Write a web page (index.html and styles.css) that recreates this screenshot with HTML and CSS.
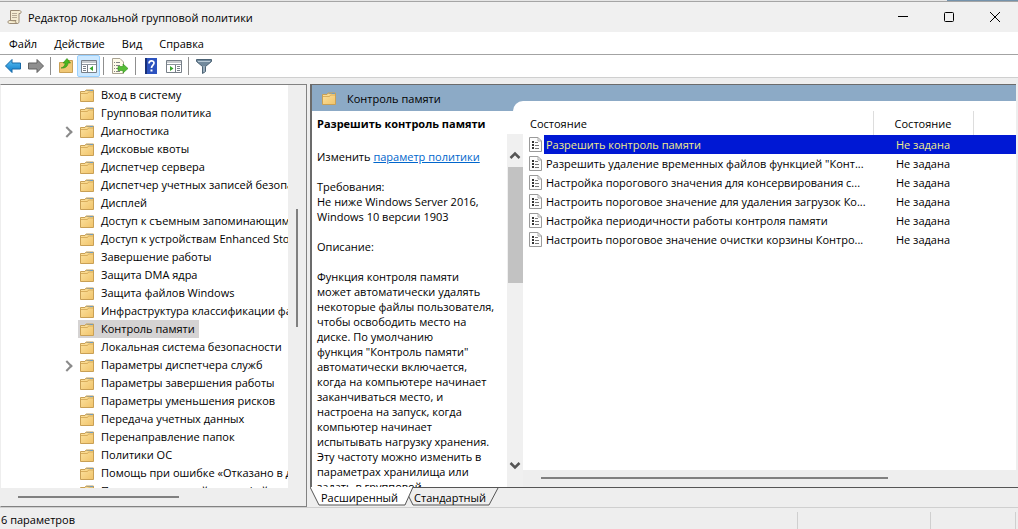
FILE: index.html
```
<!DOCTYPE html>
<html lang="ru">
<head>
    <meta charset="UTF-8">
    <meta name="viewport" content="width=device-width, initial-scale=1.0">
    <title>Редактор локальной групповой политики</title>
    <link rel="stylesheet" href="styles.css">
</head>
<body>
    <svg class="sprite" aria-hidden="true">
        <defs>
            <linearGradient id="fold" x1="0" y1="0" x2="1" y2="1">
                <stop offset="0" stop-color="#fde3a0"/>
                <stop offset="1" stop-color="#f0c36a"/>
            </linearGradient>
            <linearGradient id="blue" x1="0" y1="0" x2="0" y2="1">
                <stop offset="0" stop-color="#5cc3f5"/>
                <stop offset="1" stop-color="#0b78c8"/>
            </linearGradient>
            <symbol id="folder" viewBox="0 0 14 13">
                <path d="M.5 2.500H5l1-1.500h7.500v11.500H.5z" fill="url(#fold)" stroke="#c9a055"/>
                <path d="M6.500 1.500h6" stroke="#a8a182"/>
                <path d="M10 1.500h3" stroke="#6f9cc0"/>
                <path d="M1 4.500h6.500l1-1.500H13" fill="none" stroke="#d9ae5c"/>
            </symbol>
            <symbol id="page" viewBox="0 0 13 15">
                <path d="M.5.5h8.500l3.500 3.500v10.500H.5z" fill="#fdfdfd" stroke="#9a9a9a"/>
                <path d="M9 .5V4h3.500" fill="none" stroke="#aaa"/>
                <path d="M3 4h2v2H3zM3 7h2v2H3zM3 10h2v2H3z" fill="#333"/>
                <path d="M6 5.500h3M6 8.500h4M6 11.500h4" stroke="#777"/>
            </symbol>
        </defs>
    </svg>

    <div class="backdrop"></div>
    <header class="titlebar">
        <svg class="app-icon" viewBox="0 0 15 16">
            <path d="M3.500 1.500h9c2 0 2 3 .5 3h-1v8c0 1-.5 2-1.500 2h-8c-2 0-2-3 0-3h1z" fill="#f5ecd2" stroke="#9a8a74"/>
            <path d="M2.500 11.500h6.500c-1 1 0 3 1.500 3" fill="#e0d1aa" stroke="#9a8a74"/>
            <path d="M5 4.500h5M5 6.500h5M5 8.500h5" stroke="#b8ab96"/>
        </svg>
        <h1>Редактор локальной групповой политики</h1>
        <div class="window-buttons">
            <button aria-label="Свернуть"><svg viewBox="0 0 12 12"><path d="M1 5.500h10"/></svg></button>
            <button aria-label="Развернуть"><svg viewBox="0 0 12 12"><rect x="1.500" y="1.500" width="9" height="9" rx="1"/></svg></button>
            <button aria-label="Закрыть"><svg viewBox="0 0 12 12"><path d="M1 1l10 10M11 1L1 11"/></svg></button>
        </div>
    </header>

    <nav class="menu">
        <button>Файл</button>
        <button>Действие</button>
        <button>Вид</button>
        <button>Справка</button>
    </nav>

    <div class="toolbar">
        <button aria-label="Назад"><svg viewBox="0 0 16 16"><path d="M.5 8L7 1.500V5h8.500v6H7v3.500z" fill="url(#blue)" stroke="#1768a6"/></svg></button>
        <button aria-label="Вперёд"><svg viewBox="0 0 16 16"><path d="M15.500 8L9 1.500V5H.5v6H9v3.500z" fill="#8f8f8f" stroke="#606060"/></svg></button>
        <span class="separator"></span>
        <button aria-label="Вверх"><svg viewBox="0 0 16 16"><path d="M1.500 4.500h7l1.500-2h4.500v12h-13z" fill="#f0c775" stroke="#c9a055"/><path d="M3 10c3-1 4-2.500 4-5H5L9 .5 12.500 5H10c0 3.500-3 5.500-7 5z" fill="#4cb51f" stroke="#2f8a16" stroke-width=".6"/></svg></button>
        <button class="pressed" aria-label="Дерево консоли"><svg viewBox="0 0 16 16"><path d="M.5 2.500h15v12H.5z" fill="#fff" stroke="#777f88"/><path d="M1 4h14M1 6.500h14" stroke="#8c949c"/><path d="M6.500 7v7.500" stroke="#777f88"/><path d="M2 8.500h3M2 10.500h3M2 12.500h3" stroke="#777f88"/><path d="M12 8v5l-3.500-2.500z" fill="#35a52a"/></svg></button>
        <span class="separator"></span>
        <button class="wide" aria-label="Экспорт списка"><svg viewBox="0 0 16 16"><path d="M.5.5H8L11.500 4v11.500H.5z" fill="#fffbe9" stroke="#a8a292"/><path d="M2 4.500h1M2 7.500h1M2 10.500h1M2 13.500h1M4 4.500h4M4 7.500h4M4 10.500h4M4 13.500h4" stroke="#858585"/><path d="M6 8.500h5V6l5 4.500-5 4.500v-2.500H6z" fill="#55bd35" stroke="#2f8f1b" stroke-width=".6"/></svg></button>
        <span class="separator"></span>
        <button aria-label="Справка"><svg viewBox="0 0 16 16"><path d="M2 0h12v16H2z" fill="#2c52bf"/><path d="M2 0h2v16H2z" fill="#183079"/><path d="M6 5.500C6 2 11 2 11 5c0 2-2.500 2.200-2.500 5" fill="none" stroke="#fff" stroke-width="1.700"/><path d="M7.500 11.500h2v2h-2z" fill="#fff"/></svg></button>
        <button aria-label="Панель действий"><svg viewBox="0 0 16 16"><path d="M.5 2.500h15v12H.5z" fill="#fff" stroke="#777f88"/><path d="M1 4h14M1 6.500h14" stroke="#8c949c"/><path d="M9.500 7v7.500" stroke="#777f88"/><path d="M11 8.500h3M11 10.500h3M11 12.500h3" stroke="#777f88"/><path d="M4 8v5l3.500-2.500z" fill="#35a52a"/></svg></button>
        <span class="separator"></span>
        <button aria-label="Фильтр"><svg viewBox="0 0 16 16"><path d="M.5 1.500h15v2l-6 5v5l-3 2v-7l-6-5z" fill="#71899c" stroke="#4c6375"/><path d="M2 3.500h12" stroke="#b9cad6"/><path d="M8 8v6" stroke="#c2d0da"/></svg></button>
    </div>

    <main class="panes">
        <section class="tree-pane">
            <ul class="tree">
                <li><svg><use href="#folder"/></svg><span>Вход в систему</span></li>
                <li><svg><use href="#folder"/></svg><span>Групповая политика</span></li>
                <li class="parent"><svg><use href="#folder"/></svg><span>Диагностика</span></li>
                <li><svg><use href="#folder"/></svg><span>Дисковые квоты</span></li>
                <li><svg><use href="#folder"/></svg><span>Диспетчер сервера</span></li>
                <li><svg><use href="#folder"/></svg><span>Диспетчер учетных записей безопасности</span></li>
                <li><svg><use href="#folder"/></svg><span>Дисплей</span></li>
                <li><svg><use href="#folder"/></svg><span>Доступ к съемным запоминающим устройствам</span></li>
                <li><svg><use href="#folder"/></svg><span>Доступ к устройствам Enhanced Storage</span></li>
                <li><svg><use href="#folder"/></svg><span>Завершение работы</span></li>
                <li><svg><use href="#folder"/></svg><span>Защита DMA ядра</span></li>
                <li><svg><use href="#folder"/></svg><span>Защита файлов Windows</span></li>
                <li><svg><use href="#folder"/></svg><span>Инфраструктура классификации файлов</span></li>
                <li class="selected"><svg><use href="#folder"/></svg><span>Контроль памяти</span></li>
                <li><svg><use href="#folder"/></svg><span>Локальная система безопасности</span></li>
                <li class="parent"><svg><use href="#folder"/></svg><span>Параметры диспетчера служб</span></li>
                <li><svg><use href="#folder"/></svg><span>Параметры завершения работы</span></li>
                <li><svg><use href="#folder"/></svg><span>Параметры уменьшения рисков</span></li>
                <li><svg><use href="#folder"/></svg><span>Передача учетных данных</span></li>
                <li><svg><use href="#folder"/></svg><span>Перенаправление папок</span></li>
                <li><svg><use href="#folder"/></svg><span>Политики ОС</span></li>
                <li><svg><use href="#folder"/></svg><span>Помощь при ошибке «Отказано в доступе»</span></li>
                <li><svg><use href="#folder"/></svg><span>Поставщик теневой копии файлов</span></li>
            </ul>
            <div class="tree-vscroll"><i></i></div>
            <div class="tree-hscroll"><i></i></div>
        </section>

        <section class="detail-pane">
            <div class="detail-title">
                <svg><use href="#folder"/></svg>
                <h2>Контроль памяти</h2>
            </div>
            <div class="detail-body">
                <div class="description">
                    <h3>Разрешить контроль памяти</h3>
                    <div class="description-text">
                        <p>Изменить <a href="#">параметр политики</a></p>
                        <p>Требования:<br>Не ниже Windows Server 2016,<br>Windows 10 версии 1903</p>
                        <p>Описание:</p>
                        <p>Функция контроля памяти<br>может автоматически удалять<br>некоторые файлы пользователя,<br>чтобы освободить место на<br>диске. По умолчанию<br>функция "Контроль памяти"<br>автоматически включается,<br>когда на компьютере начинает<br>заканчиваться место, и<br>настроена на запуск, когда<br>компьютер начинает<br>испытывать нагрузку хранения.<br>Эту частоту можно изменить в<br>параметрах хранилища или<br>задать в групповой</p>
                    </div>
                    <div class="vscroll">
                        <svg viewBox="0 0 12 9"><path d="M1.500 7L6 2.500 10.500 7"/></svg>
                        <i></i>
                        <svg viewBox="0 0 12 9"><path d="M1.500 2L6 6.500 10.500 2"/></svg>
                    </div>
                </div>
                <div class="list">
                    <table>
                        <thead>
                            <tr><th class="name">Состояние</th><th class="state">Состояние</th><th></th></tr>
                        </thead>
                        <tbody>
                            <tr class="selected"><td><svg><use href="#page"/></svg><span>Разрешить контроль памяти</span></td><td>Не задана</td><td></td></tr>
                            <tr><td><svg><use href="#page"/></svg><span>Разрешить удаление временных файлов функцией "Конт...</span></td><td>Не задана</td><td></td></tr>
                            <tr><td><svg><use href="#page"/></svg><span>Настройка порогового значения для консервирования с...</span></td><td>Не задана</td><td></td></tr>
                            <tr><td><svg><use href="#page"/></svg><span>Настроить пороговое значение для удаления загрузок Ко...</span></td><td>Не задана</td><td></td></tr>
                            <tr><td><svg><use href="#page"/></svg><span>Настройка периодичности работы контроля памяти</span></td><td>Не задана</td><td></td></tr>
                            <tr><td><svg><use href="#page"/></svg><span>Настроить пороговое значение очистки корзины Контро...</span></td><td>Не задана</td><td></td></tr>
                        </tbody>
                    </table>
                    <div class="hscroll"><i></i></div>
                </div>
            </div>
        </section>

        <div class="tabs">
            <svg class="tab-shape" viewBox="0 0 190 20">
                <path d="M98 8l5 10h76l9-17" fill="none" stroke="#555"/>
                <path d="M0 0l9 18h86l8-18z" fill="#fff"/>
                <path d="M0 0l9 18h86l8-18" fill="none" stroke="#555"/>
            </svg>
            <button>Расширенный</button>
            <button>Стандартный</button>
        </div>
    </main>

    <footer class="status">
        <span>6 параметров</span>
        <i></i>
        <i></i>
    </footer>
</body>
</html>
```
FILE: styles.css
```
* {
    box-sizing: border-box;
}

body {
    display: flex;
    flex-direction: column;
    height: 100vh;
    margin: 0;
    overflow: hidden;
    background: #eee;
    color: #000;
    font: 11px/15px "Open Sans", "Noto Sans", sans-serif;
}

h1, h2, h3, p, ul {
    margin: 0;
    padding: 0;
    font-size: 11px;
    font-weight: normal;
}

button {
    padding: 0;
    border: 0;
    background: none;
    color: inherit;
    font: inherit;
}

svg {
    display: block;
    flex: none;
}

.sprite {
    position: absolute;
    width: 0;
    height: 0;
}

.backdrop {
    height: 2px;
    background: linear-gradient(90deg, #e6e6e6 93%, #7492ab 93%);
    border-bottom: 1px solid #a5a5a5;
}

.titlebar {
    display: flex;
    align-items: center;
    height: 30px;
    padding-left: 7px;
    background: #f0f0f0;
}

.app-icon {
    width: 15px;
    height: 16px;
    margin-right: 6px;
}

.window-buttons {
    display: flex;
    margin-left: auto;
}

.window-buttons button {
    display: grid;
    place-items: center;
    width: 46px;
    height: 30px;
}

.window-buttons svg {
    width: 12px;
    height: 12px;
    fill: none;
    stroke: #000;
}

.menu {
    display: flex;
    gap: 17px;
    height: 23px;
    padding-left: 9px;
    background: #fff;
    border-bottom: 1px solid #a3a3a3;
}

.toolbar {
    display: flex;
    align-items: center;
    height: 23px;
    padding-left: 1px;
    background: #fff;
    border-bottom: 1px solid #cfcfcf;
}

.toolbar button {
    display: grid;
    place-items: center;
    width: 23px;
    height: 22px;
}

.toolbar .wide {
    width: 25px;
}

.toolbar .pressed {
    background: #cce8ff;
    border: 1px solid #99d1ff;
    border-radius: 2px;
}

.toolbar svg {
    width: 16px;
    height: 16px;
}

.separator {
    width: 1px;
    height: 18px;
    margin: 0 3px;
    background: #8f8f8f;
}

.panes {
    display: grid;
    grid-template-columns: 307px 1fr;
    grid-template-rows: 1fr 20px;
    column-gap: 3px;
    flex: 1;
    min-height: 0;
    margin-top: 6px;
}

/* console tree */
.tree-pane {
    display: grid;
    grid-template-columns: 1fr 18px;
    grid-template-rows: 1fr 18px;
    grid-row: 1 / 3;
    min-height: 0;
    border: 1px solid #828282;
    border-left-color: #eee;
}

.tree {
    padding-top: 1px;
    overflow: hidden;
    background: #fff;
    list-style: none;
}

.tree li {
    position: relative;
    display: flex;
    align-items: center;
    height: 18px;
    padding-left: 77px;
    white-space: nowrap;
}

.tree li svg {
    position: relative;
    width: 14px;
    height: 13px;
    margin-right: -16px;
    margin-left: 2px;
}

.tree li span {
    padding: 1px 4px 2px 23px;
}

.tree .selected span {
    background: #d5d3d3;
}

.parent::before {
    content: "";
    position: absolute;
    top: 6px;
    left: 62px;
    width: 6px;
    height: 6px;
    border: solid #8a8a8a;
    border-width: 2px 2px 0 0;
    transform: rotate(45deg);
}

.tree-vscroll {
    padding: 124px 0 0 8px;
}

.tree-vscroll i {
    display: block;
    width: 2px;
    height: 118px;
    background: #808080;
}

.tree-hscroll {
    grid-column: 1 / 3;
    padding: 8px 0 0 17px;
}

.tree-hscroll i {
    display: block;
    width: 161px;
    height: 2px;
    background: #808080;
}

/* right pane */
.detail-pane {
    display: flex;
    flex-direction: column;
    min-height: 0;
    border: solid #6b6b6b;
    border-width: 1px 0 0 2px;
    margin-right: 2px;
}

.detail-title {
    display: flex;
    align-items: center;
    flex: none;
    height: 26px;
    padding-left: 10px;
    background: #8caac6;
}

.detail-title svg {
    width: 14px;
    height: 13px;
    margin-right: 11px;
}

.detail-body {
    display: flex;
    flex: 1;
    min-height: 0;
    background: #fff;
}

.description {
    display: grid;
    grid-template-columns: 1fr 16px;
    grid-template-rows: 23px 1fr;
    flex: none;
    width: 211px;
    min-height: 0;
}

.description h3 {
    padding: 5px;
    grid-column: 1 / 3;
    font-weight: bold;
}

.description-text {
    min-height: 0;
    padding: 15px 0 0 5px;
    overflow: hidden;
    white-space: nowrap;
}

.description-text p {
    margin-bottom: 15px;
}

a {
    color: #0066cc;
}

.vscroll {
    display: flex;
    flex-direction: column;
    align-items: center;
    min-height: 0;
    padding: 17px 0;
    background: #f0f0f0;
}

.vscroll svg {
    width: 12px;
    height: 9px;
    fill: none;
    stroke: #555;
    stroke-width: 2.5;
}

.vscroll i {
    width: 15px;
    height: 116px;
    margin: 7px 0 auto;
    background: #c2c2c2;
}

/* the list rises above the body and covers part of the blue header */
.list {
    display: flex;
    flex-direction: column;
    flex: 1;
    min-width: 0;
}

.list::before {
    content: "";
    flex: none;
    height: 10px;
    margin: -10px 0 0 -10px;
    background: #fff;
    border-top-left-radius: 10px;
}

table {
    width: 100%;
    table-layout: fixed;
    border-collapse: collapse;
}

th {
    height: 24px;
    padding: 0;
    border-right: 1px solid #ddd;
    font-weight: normal;
}

th:last-child {
    border: 0;
}

.name {
    width: 350px;
    padding-left: 7px;
    text-align: left;
}

.state {
    width: 100px;
}

td {
    height: 19px;
    padding: 0;
    text-align: center;
    white-space: nowrap;
}

td:first-child {
    display: flex;
    align-items: center;
}

td svg {
    width: 13px;
    height: 15px;
    margin: 0 3px 0 6px;
}

td span {
    flex: 1;
    padding: 2px 1px;
    text-align: left;
}

.selected td {
    background: #0018d4;
    color: #f0ec8c;
}

.selected td:first-child {
    background: linear-gradient(90deg, #fff 21px, #0018d4 21px);
}

.hscroll {
    height: 17px;
    margin-top: auto;
    padding: 7px 0 0 18px;
    background: #eee;
}

.hscroll i {
    display: block;
    width: 347px;
    height: 2px;
    background: #808080;
}

.tabs {
    position: relative;
    display: flex;
    gap: 16px;
    padding-left: 11px;
    border-top: 1px solid #555;
}

.tabs button {
    position: relative;
    height: 18px;
}

.tab-shape {
    position: absolute;
    top: -1px;
    left: 0;
    width: 190px;
    height: 20px;
}

.status {
    display: flex;
    height: 22px;
    padding: 4px 2px 0 1px;
    border-top: 1px solid #cfcfcf;
}

.status span {
    margin-right: auto;
}

.status i {
    width: 133px;
    border-left: 1px solid #cfcfcf;
}

.status i:last-child {
    width: 86px;
    border-right: 1px solid #cfcfcf;
}
```
